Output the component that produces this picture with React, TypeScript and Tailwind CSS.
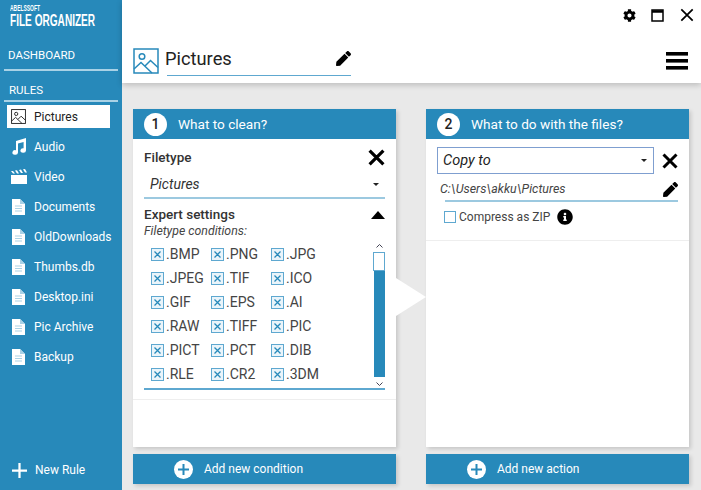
import { FaCog, FaInfoCircle, FaPen } from 'react-icons/fa';

const rules = ['Documents', 'OldDownloads', 'Thumbs.db', 'Desktop.ini', 'Pic Archive', 'Backup'];
const filetypes = ['.BMP', '.PNG', '.JPG', '.JPEG', '.TIF', '.ICO', '.GIF', '.EPS', '.AI', '.RAW', '.TIFF', '.PIC', '.PICT', '.PCT', '.DIB', '.RLE', '.CR2', '.3DM'];

function PictureIcon({ size, color, stroke }: { size: number; color: string; stroke: number }) {
  return (
    <svg width={size} height={size} viewBox="0 0 26 26" fill="none" stroke={color} strokeWidth={stroke}>
      <rect x="1" y="1" width="24" height="24" />
      <circle cx="9" cy="8.5" r="2.8" />
      <path d="M1 21 L8 14.5 L19 25 M12 18 L17.5 12.5 L25 19.5" />
    </svg>
  );
}

function DocIcon() {
  return (
    <svg width="13" height="16" viewBox="0 0 13 16">
      <path d="M0 0 H8 L13 5 V16 H0 Z" fill="#fff" />
      <path d="M8 0 V5 H13 Z" fill="#a9d2e6" />
      <path d="M3 7 H10 M3 9.5 H10 M3 12 H10" stroke="#a9d2e6" strokeWidth="1.2" />
    </svg>
  );
}

function CloseIcon({ size, weight = 3 }: { size: number; weight?: number }) {
  return (
    <svg width={size} height={size} viewBox="0 0 16 16" stroke="#000" strokeWidth={weight}>
      <path d="M1.5 1.5 L14.5 14.5 M14.5 1.5 L1.5 14.5" />
    </svg>
  );
}

function Caret() {
  return <span className="h-0 w-0 border-x-[3px] border-t-[3.5px] border-x-transparent border-t-[#222]" />;
}

function SideRow({ label, icon, active }: { label: string; icon: React.ReactNode; active?: boolean }) {
  return (
    <div className={`flex h-[23px] w-[103px] items-center whitespace-nowrap text-[12px] ${active ? 'bg-white text-[#222]' : 'text-white'}`}>
      <span className="mr-[4px] flex w-[23px] shrink-0 justify-center">{icon}</span>
      <span>{label}</span>
    </div>
  );
}

function CheckItem({ label }: { label: string }) {
  return (
    <div className="flex h-[24px] items-center text-[14px] text-[#444]">
      <span className="mr-[2px] flex h-[13px] w-[13px] items-center justify-center border border-[#5ea8d0] bg-[#eaf4fa]">
        <svg width="7" height="7" viewBox="0 0 7 7" stroke="#2789ba" strokeWidth="1.3">
          <path d="M0.5 0.5 L6.5 6.5 M6.5 0.5 L0.5 6.5" />
        </svg>
      </span>
      {label}
    </div>
  );
}

function PanelHead({ n, title }: { n: number; title: string }) {
  return (
    <div className="flex h-[30px] items-center bg-[#2789ba] pl-[11px] text-[13.6px] text-white">
      <span className="mr-[11px] flex h-[23px] w-[23px] items-center justify-center rounded-full bg-white text-[14px] font-medium text-[#222]">{n}</span>
      {title}
    </div>
  );
}

function AddButton({ label }: { label: string }) {
  return (
    <div className="flex h-[30px] items-center bg-[#2789ba] pl-[41px] text-[12px] text-white shadow-[2px_2px_4px_rgba(0,0,0,0.15)]">
      <span className="mr-[11px] flex h-[19px] w-[19px] items-center justify-center rounded-full bg-white">
        <svg width="13" height="13" viewBox="0 0 13 13" stroke="#2789ba" strokeWidth="2">
          <path d="M6.5 1 V12 M1 6.5 H12" />
        </svg>
      </span>
      {label}
    </div>
  );
}

export default function App() {
  return (
    <div className="flex h-[490px] w-[701px] overflow-hidden bg-[#e9e9e9] font-['Roboto',sans-serif]">
      <aside className="flex w-[122px] flex-col bg-[#2789ba] text-white">
        <div className="h-[44px] pl-[10px] pt-[4px] font-['Liberation_Sans',sans-serif] font-bold leading-none">
          <div className="origin-left scale-x-[.55] whitespace-nowrap text-[9px]">ABELSSOFT</div>
          <div className="origin-left scale-x-[.63] whitespace-nowrap text-[16px]">FILE ORGANIZER</div>
        </div>
        <div className="mx-[4px] flex h-[27px] items-center border-b-2 border-[#a9d2e6] pb-[1px] pl-[4px] text-[11.5px]">DASHBOARD</div>
        <div className="mx-[4px] mt-[9px] flex h-[22px] items-center border-b-2 border-[#a9d2e6] pl-[5px] pt-[2px] text-[11.5px]">RULES</div>
        <div className="mt-[3px] flex flex-col gap-[7px] pl-[7px]">
          <SideRow active label="Pictures" icon={<PictureIcon size={15} color="#222" stroke={1.6} />} />
          <SideRow
            label="Audio"
            icon={
              <svg width="16" height="17" viewBox="0 0 16 17" fill="#fff">
                <path d="M5 3 L15 0 V12.5 A2.8 2.3 0 1 1 12.6 10.2 V4 L7 5.6 V14.5 A2.8 2.3 0 1 1 5 12.2 Z" />
              </svg>
            }
          />
          <SideRow
            label="Video"
            icon={
              <svg width="16" height="15" viewBox="0 0 16 15" fill="#fff">
                <path d="M0 6 H16 V15 H0 Z" />
                <path d="M0 2 L2 4.5 H4 L2 2 Z M4 1.6 L6 4.5 H8 L6 1.2 Z M8 0.9 L10 4 H12 L10 0.5 Z M12 0.3 L14 3.5 H16 L14 0 Z" />
              </svg>
            }
          />
          {rules.map((r) => (
            <SideRow key={r} label={r} icon={<DocIcon />} />
          ))}
        </div>
        <div className="mt-auto mb-[11px] flex items-center pl-[12px] text-[12px]">
          <svg className="mr-[8px]" width="15" height="15" viewBox="0 0 16 16" stroke="#fff" strokeWidth="2.4">
            <path d="M8 0 V16 M0 8 H16" />
          </svg>
          New Rule
        </div>
      </aside>

      <div className="flex min-w-0 flex-1 flex-col">
        <header className="relative z-10 h-[83px] bg-white pl-[11px] pr-[13px] shadow-[0_2px_6px_rgba(0,0,0,0.2)]">
          <div className="-mr-[6px] flex h-[30px] items-center justify-end gap-[15px] text-black">
            <FaCog size={13} />
            <svg width="13" height="13" viewBox="0 0 13 13" fill="none" stroke="#000">
              <rect x="1" y="1" width="11" height="11" strokeWidth="1.5" />
              <path d="M1 2.5 H12" strokeWidth="2.5" />
            </svg>
            <span className="ml-[1px]">
              <CloseIcon size={14} weight={2} />
            </span>
          </div>
          <div className="mt-[15px] flex items-center">
            <PictureIcon size={26} color="#2789ba" stroke={1.5} />
            <div className="relative ml-[8px] flex h-[31px] w-[184px] items-center justify-between border-b border-[#5ea8d0] pb-[3px] text-[18.3px] text-[#222]">
              <span className="-ml-[2px]">Pictures</span>
              <FaPen size={15} className="text-black" />
            </div>
            <svg className="ml-auto" width="22" height="18" viewBox="0 0 22 18" fill="#000">
              <rect y="0" width="22" height="3.6" />
              <rect y="7" width="22" height="3.6" />
              <rect y="14" width="22" height="3.6" />
            </svg>
          </div>
        </header>

        <main className="relative flex gap-[30px] pl-[11px] pt-[26px]">
          <section className="flex w-[263px] flex-col gap-[7px]">
            <div className="h-[338px] bg-white shadow-[2px_2px_4px_rgba(0,0,0,0.15)]">
              <PanelHead n={1} title="What to clean?" />
              <div className="px-[11px]">
                <div className="flex h-[36px] items-center justify-between text-[13.5px] font-medium text-[#333]">
                  Filetype
                  <CloseIcon size={17} />
                </div>
                <div className="flex h-[24px] items-center justify-between border-b-2 border-[#9cc9e0] pb-[3px] pl-[6px] pr-[6px] text-[14px] italic text-[#333]">
                  Pictures
                  <Caret />
                </div>
                <div className="mt-[7px] flex h-[17px] items-center justify-between text-[13.5px] font-medium text-[#333]">
                  Expert settings
                  <span className="h-0 w-0 border-x-[7.5px] border-b-[8px] border-x-transparent border-b-black" />
                </div>
                <div className="mt-[1px] text-[12.3px] italic leading-[15px] text-[#444]">Filetype conditions:</div>
                <div className="relative mt-[5px] flow-root h-[146px] border-b-2 border-[#5ea8d0] pl-[7px]">
                  <div className="-mt-[2px] grid w-[180px] grid-cols-3">
                    {filetypes.map((f) => (
                      <CheckItem key={f} label={f} />
                    ))}
                  </div>
                  <div className="absolute right-0 top-0 flex h-full w-[12px] flex-col items-center">
                    <svg width="7" height="4" viewBox="0 0 7 4" fill="none" stroke="#445">
                      <path d="M0.5 3.5 L3.5 0.5 L6.5 3.5" />
                    </svg>
                    <div className="mt-[4px] h-[19px] w-[12px] border border-[#5ea8d0] bg-white" />
                    <div className="h-[106px] w-[11px] bg-[#2789ba]" />
                    <svg className="mt-[5px]" width="7" height="4" viewBox="0 0 7 4" fill="none" stroke="#445">
                      <path d="M0.5 0.5 L3.5 3.5 L6.5 0.5" />
                    </svg>
                  </div>
                </div>
              </div>
              <div className="mt-[9px] border-t border-[#eeeeee]" />
            </div>
            <AddButton label="Add new condition" />
          </section>

          <section className="flex w-[263px] flex-col gap-[7px]">
            <div className="h-[338px] bg-white shadow-[2px_2px_4px_rgba(0,0,0,0.15)]">
              <PanelHead n={2} title="What to do with the files?" />
              <div className="pl-[11px] pr-[11px] pt-[8px]">
                <div className="flex items-center justify-between">
                  <div className="flex h-[27px] w-[217px] items-center justify-between border border-[#7f9fd0] pl-[5px] pr-[6px] text-[14.5px] italic text-[#222]">
                    Copy to
                    <Caret />
                  </div>
                  <CloseIcon size={16} />
                </div>
                <div className="ml-[8px] mt-[5px] flex h-[23px] items-center justify-between border-b-2 border-[#9cc9e0] pb-[1px] text-[12.4px] italic text-[#444]">
                  <span className="-ml-[5px]">C:\Users\akku\Pictures</span>
                  <FaPen size={15} className="text-black" />
                </div>
                <div className="ml-[7px] mt-[8px] flex h-[14px] items-center text-[12px] text-[#444]">
                  <span className="mr-[3px] h-[12px] w-[12px] border border-[#5ea8d0]" />
                  Compress as ZIP
                  <FaInfoCircle size={16} className="ml-[7px] text-black" />
                </div>
              </div>
              <div className="mt-[16px] border-t border-[#eeeeee]" />
            </div>
            <AddButton label="Add new action" />
          </section>

          <span className="absolute left-[274px] top-[195px] h-0 w-0 border-y-[19px] border-l-[30px] border-y-transparent border-l-white" />
        </main>
      </div>
    </div>
  );
}
